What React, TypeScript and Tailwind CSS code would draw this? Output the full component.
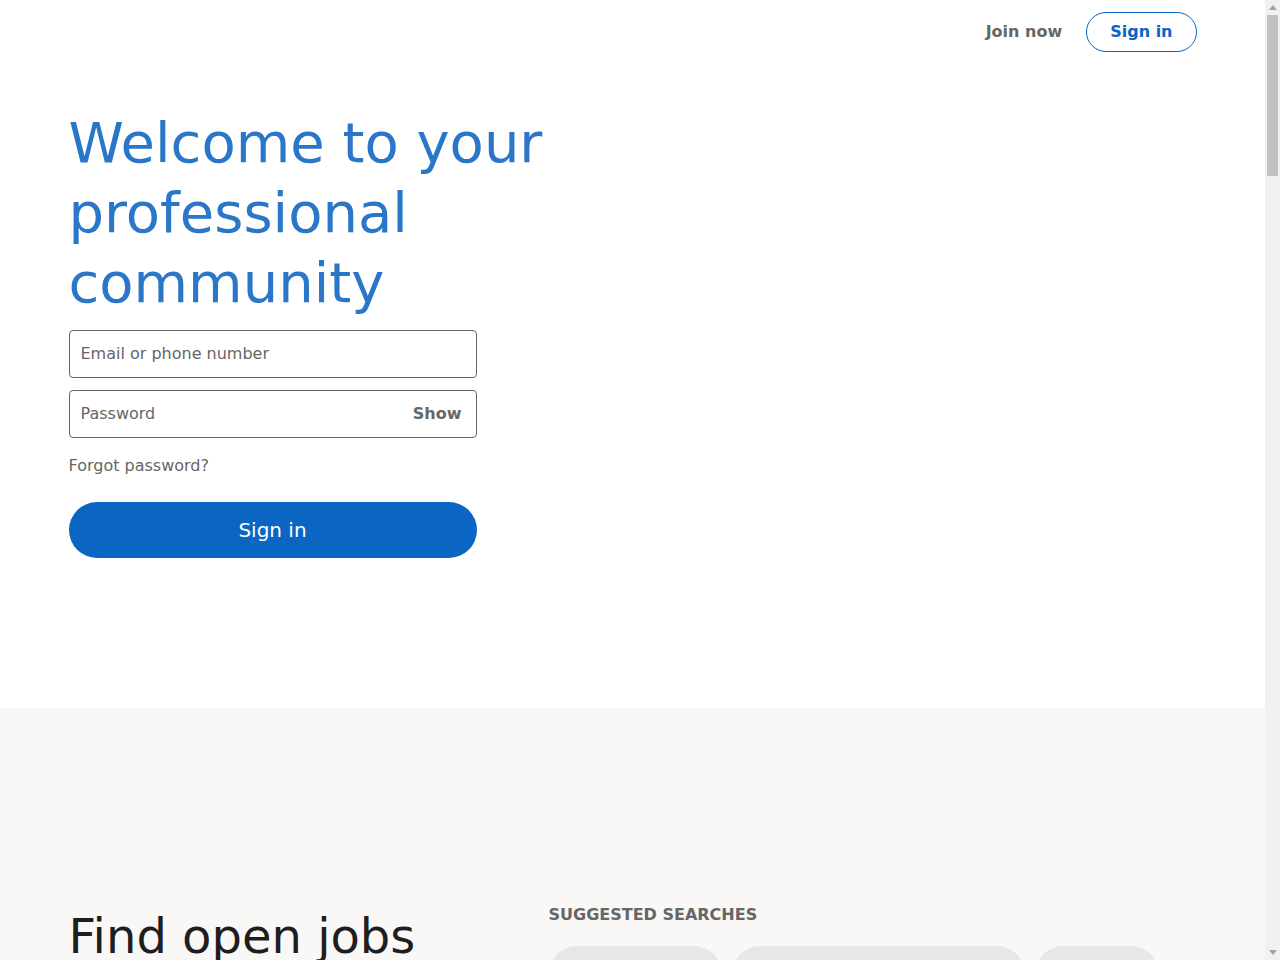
export default function App() {
  const searches = [
    { label: "Engineering", w: "w-[173px]" },
    { label: "Business Development", w: "w-[293px]" },
    { label: "Finance", w: "w-[124px]" },
  ];
  const more = [
    "Administrative Assistant",
    "Retail Associate",
    "Customer Service",
    "Operations",
    "Information Technology",
    "Marketing",
    "Human Resources",
  ];

  return (
    <div className="flex h-screen overflow-hidden bg-white font-['DejaVu_Sans',sans-serif] text-[#191919]">
      <div className="min-w-0 flex-1 overflow-hidden">
        <header className="mx-auto flex h-16 max-w-[1128px] items-center justify-end">
          <div className="flex items-center gap-6">
            <a href="#" className="text-base font-bold text-[#666666]">
              Join now
            </a>
            <a
              href="#"
              className="flex h-10 items-center rounded-full border border-[#0a66c2] px-[23px] text-base font-bold text-[#0a66c2]"
            >
              Sign in
            </a>
          </div>
        </header>

        <section className="mx-auto max-w-[1128px] pt-[44px] pb-[150px]">
          <h1 className="w-[55%] text-[56px] font-normal leading-[70px] text-[#2a76c8]">
            Welcome to your professional community
          </h1>
          <form className="mt-3 w-[408px]" onSubmit={(e) => e.preventDefault()}>
            <div className="flex h-12 items-center rounded border border-[#666666] pr-3 pl-[11px]">
              <input
                type="text"
                placeholder="Email or phone number"
                className="w-full bg-transparent text-base text-[#191919] outline-none placeholder:text-[#666666]"
              />
            </div>
            <div className="mt-3 flex h-12 items-center rounded border border-[#666666] pr-[14px] pl-[11px]">
              <input
                type="password"
                placeholder="Password"
                className="w-full bg-transparent text-base text-[#191919] outline-none placeholder:text-[#666666]"
              />
              <button type="button" className="text-base font-bold text-[#666666]">
                Show
              </button>
            </div>
            <a href="#" className="mt-4 block text-base leading-6 text-[#666666]">
              Forgot password?
            </a>
            <button
              type="submit"
              className="mt-6 flex h-14 w-full items-center justify-center rounded-full bg-[#0a66c2] text-xl text-white"
            >
              Sign in
            </button>
          </form>
        </section>

        <section className="bg-[#f9f8f6] pt-[195px] pb-24">
          <div className="mx-auto flex max-w-[1128px] items-start">
            <div className="w-[480px] shrink-0">
              <h2 className="mt-[3px] w-[408px] text-5xl leading-[60px] font-normal text-[#1e1e1e]">
                Find open jobs and internships
              </h2>
            </div>
            <div className="flex-1">
              <h3 className="text-base leading-6 font-bold text-[#666666] uppercase">
                Suggested searches
              </h3>
              <div className="mt-[19px] flex flex-wrap gap-x-[10px] gap-y-3">
                {searches.map((s) => (
                  <a
                    key={s.label}
                    href="#"
                    className={`flex h-14 items-center justify-center rounded-full bg-[#e8e7e5] text-xl text-[#4d4d4d] ${s.w}`}
                  >
                    {s.label}
                  </a>
                ))}
                {more.map((m) => (
                  <a
                    key={m}
                    href="#"
                    className="flex h-14 items-center justify-center rounded-full bg-[#e8e7e5] px-6 text-xl text-[#4d4d4d]"
                  >
                    {m}
                  </a>
                ))}
              </div>
            </div>
          </div>
        </section>
      </div>

      {/* page scrollbar */}
      <div className="flex w-[15px] shrink-0 flex-col bg-[#f1f1f1]">
        <div className="flex h-[15px] items-center justify-center">
          <svg width="8" height="5" viewBox="0 0 8 5">
            <path d="M0 5 L4 0 L8 5 Z" fill="#a3a3a3" />
          </svg>
        </div>
        <div className="mx-[2px] h-[161px] bg-[#c1c1c1]" />
        <div className="flex-1" />
        <div className="flex h-[15px] items-center justify-center">
          <svg width="8" height="5" viewBox="0 0 8 5">
            <path d="M0 0 L4 5 L8 0 Z" fill="#a3a3a3" />
          </svg>
        </div>
      </div>
    </div>
  );
}
